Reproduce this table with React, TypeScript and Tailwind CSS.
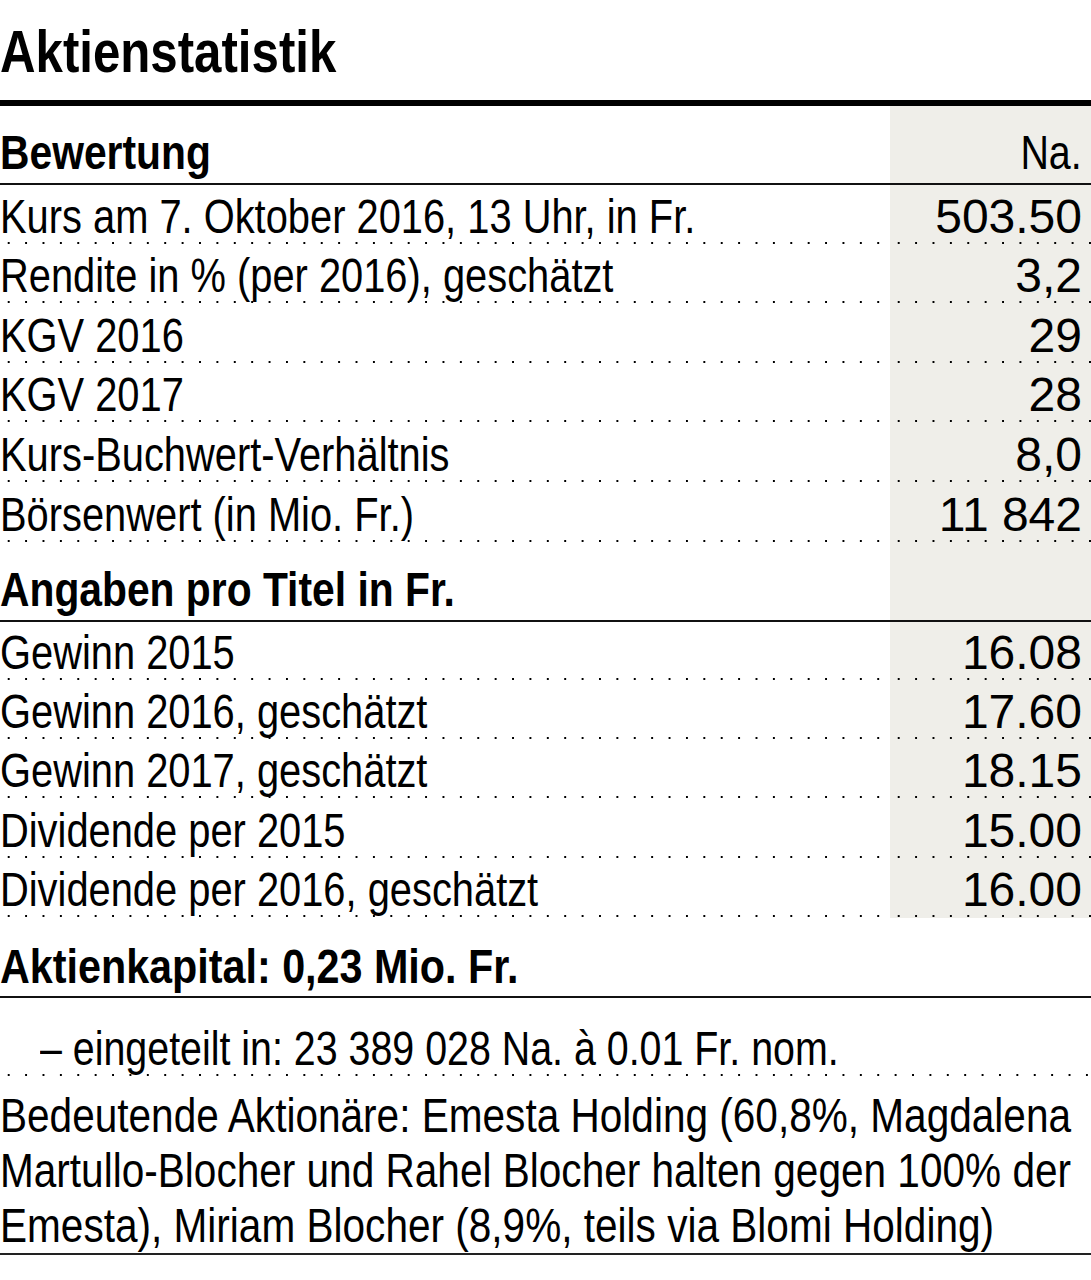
import React from 'react';

// dotted rule under each table row
const dots =
  "bg-[radial-gradient(circle,#000_0.9px,transparent_1.5px)] bg-[length:17.4px_4px] bg-[position:left_bottom] bg-repeat-x";

// no condensed face installed, so squeeze the text horizontally
const narrowLeft = "inline-block origin-left scale-x-[0.83] whitespace-nowrap";
const boldNarrow = "inline-block origin-left scale-x-[0.85] whitespace-nowrap";

const bewertung: [string, string][] = [
  ["Kurs am 7. Oktober 2016, 13 Uhr, in Fr.", "503.50"],
  ["Rendite in % (per 2016), geschätzt", "3,2"],
  ["KGV 2016", "29"],
  ["KGV 2017", "28"],
  ["Kurs-Buchwert-Verhältnis", "8,0"],
  ["Börsenwert (in Mio. Fr.)", "11 842"],
];

const proTitel: [string, string][] = [
  ["Gewinn 2015", "16.08"],
  ["Gewinn 2016, geschätzt", "17.60"],
  ["Gewinn 2017, geschätzt", "18.15"],
  ["Dividende per 2015", "15.00"],
  ["Dividende per 2016, geschätzt", "16.00"],
];

interface RowProps {
  label: string;
  value: string;
  height: string;
}

function Row({ label, value, height }: RowProps) {
  return (
    <div className={`flex ${height}`}>
      <div className={`flex-1 flex items-end pb-[4px] ${dots}`}>
        <span className={narrowLeft}>{label}</span>
      </div>
      <div className={`w-[201px] flex items-end justify-end pr-[9px] pb-[4px] bg-[#efeee9] whitespace-nowrap ${dots}`}>
        {value}
      </div>
    </div>
  );
}

function SectionHeader({ title, value }: { title: string; value?: string }) {
  return (
    <div className="flex h-[79px] border-b-2 border-[#111]">
      <div className="flex-1 flex items-end pb-[6px] font-bold">
        <span className={boldNarrow}>{title}</span>
      </div>
      <div className="w-[201px] flex items-end justify-end pr-[9px] pb-[6px] bg-[#efeee9]">
        {value && <span className="inline-block origin-right scale-x-[0.82]">{value}</span>}
      </div>
    </div>
  );
}

export default function App() {
  return (
    <div className="w-[1091px] h-[1280px] overflow-hidden bg-white text-black font-['Liberation_Sans',Arial,sans-serif] text-[48px] leading-[48px]">
      <h1 className="h-[106px] border-b-[6px] border-black pt-[22px] text-[60px] leading-[60px] font-bold">
        <span className="inline-block origin-left scale-x-[0.82] whitespace-nowrap">Aktienstatistik</span>
      </h1>

      <SectionHeader title="Bewertung" value="Na." />
      {bewertung.map(([label, value]) => (
        <Row key={label} label={label} value={value} height="h-[59.6px]" />
      ))}

      <SectionHeader title="Angaben pro Titel in Fr." />
      {proTitel.map(([label, value]) => (
        <Row key={label} label={label} value={value} height="h-[59.3px]" />
      ))}

      <div className="h-[80px] flex items-end pb-[5px] border-b-2 border-[#111] font-bold">
        <span className="inline-block origin-left scale-x-[0.86] whitespace-nowrap">Aktienkapital: 0,23 Mio. Fr.</span>
      </div>
      <div className={`h-[79px] flex items-end pb-[4px] pl-[40px] ${dots}`}>
        <span className="inline-block origin-left scale-x-[0.82] whitespace-nowrap">
          – eingeteilt in: 23 389 028 Na. à 0.01 Fr. nom.
        </span>
      </div>
      <div className="pt-[11px] border-b-2 border-[#222]">
        <p className="w-max origin-left scale-x-[0.845] leading-[55px] whitespace-nowrap">
          Bedeutende Aktionäre: Emesta Holding (60,8%, Magdalena
          <br />
          Martullo-Blocher und Rahel Blocher halten gegen 100% der
          <br />
          Emesta), Miriam Blocher (8,9%, teils via Blomi Holding)
        </p>
      </div>
    </div>
  );
}
